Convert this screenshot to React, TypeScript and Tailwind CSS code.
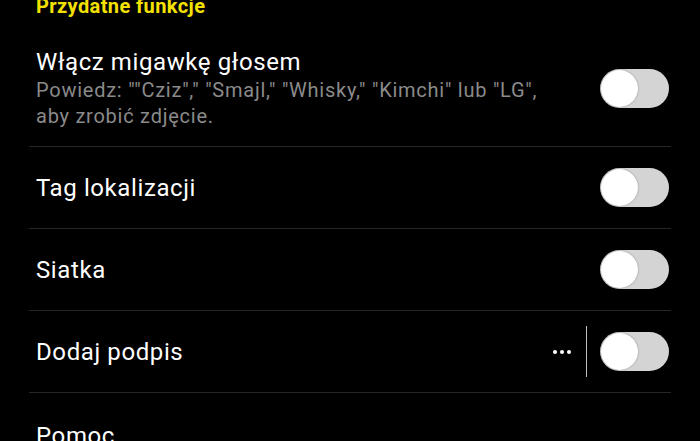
import React from 'react';

function Toggle() {
  return (
    <div className="flex h-[39px] w-[69px] shrink-0 items-center rounded-full bg-[#d4d4d4] px-[1px]">
      <div className="h-[37px] w-[37px] rounded-full bg-white shadow-[0_0_2px_rgba(0,0,0,0.35)]" />
    </div>
  );
}

function Row({ title, extra }: { title: string; extra?: React.ReactNode }) {
  return (
    <div className="flex h-[82px] items-center justify-between border-b border-[#262626] pl-[7px] pr-[2px]">
      <span className="text-[24px] leading-[30px] tracking-[0.6px] text-white">{title}</span>
      <div className="flex items-center">
        {extra}
        <Toggle />
      </div>
    </div>
  );
}

export default function App() {
  return (
    <div
      className="h-[441px] w-[700px] overflow-hidden bg-black"
      style={{ fontFamily: 'Roboto, "Noto Sans", sans-serif' }}
    >
      <div className="-mt-[6px] pl-[36px] text-[20px] font-bold leading-[24px] tracking-[0.4px] text-[#f5e100]">
        Przydatne funkcje
      </div>
      <div className="mx-[29px]">
        <div className="flex items-center justify-between border-b border-[#262626] pb-[17px] pl-[7px] pr-[2px] pt-[29px]">
          <div>
            <div className="text-[24px] leading-[30px] tracking-[0.6px] text-white">Włącz migawkę głosem</div>
            <div className="text-[20px] leading-[26px] tracking-[0.75px] text-[#8a8a8a]">
              Powiedz: ""Cziz"," "Smajl," "Whisky," "Kimchi" lub "LG",
              <br />
              aby zrobić zdjęcie.
            </div>
          </div>
          <Toggle />
        </div>
        <Row title="Tag lokalizacji" />
        <Row title="Siatka" />
        <Row
          title="Dodaj podpis"
          extra={
            <div className="flex items-center">
              <div className="flex gap-[3px]">
                <span className="h-[4px] w-[4px] rounded-full bg-white" />
                <span className="h-[4px] w-[4px] rounded-full bg-white" />
                <span className="h-[4px] w-[4px] rounded-full bg-white" />
              </div>
              <div className="ml-[15px] mr-[13px] h-[51px] w-[1px] bg-[#bdbdbd]" />
            </div>
          }
        />
        <div className="pl-[7px] pt-[28px] text-[24px] leading-[30px] tracking-[0.6px] text-white">Pomoc</div>
      </div>
    </div>
  );
}
